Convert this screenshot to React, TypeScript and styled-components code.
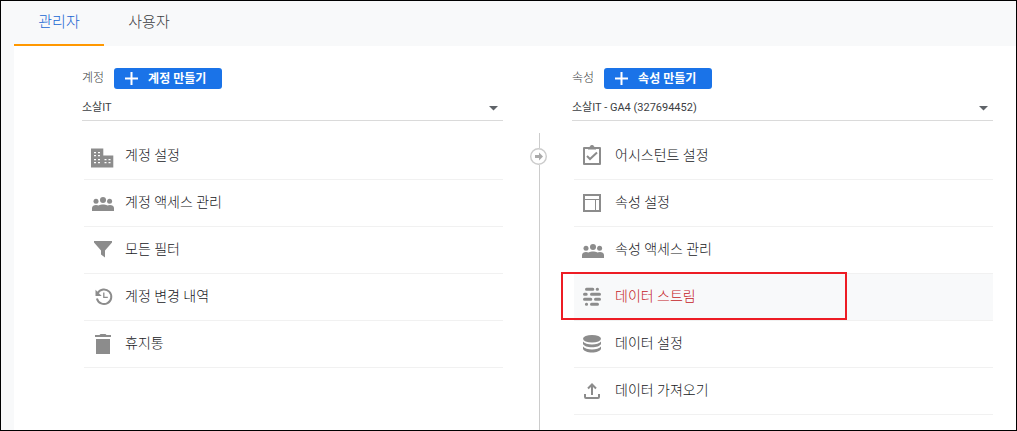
import React from "react";
import styled, { createGlobalStyle, css } from "styled-components";

const GlobalStyle = createGlobalStyle`
  *, *::before, *::after { box-sizing: border-box; }
  body {
    margin: 0;
    background: #fff;
    color: #3c4043;
    font-family: Roboto, "Noto Sans CJK KR", sans-serif;
    font-size: 14px;
  }
`;

const Page = styled.div`
  display: flex;
  flex-direction: column;
  min-height: 100vh;
  padding-left: 13px;
  border: 1px solid #000;
  background: #f8f9fa;
`;

const Tabs = styled.nav`
  display: flex;
  height: 45px;
`;

const Tab = styled.a<{ $active?: boolean }>`
  display: flex;
  align-items: center;
  justify-content: center;
  width: 90px;
  padding-bottom: 2px;
  border-bottom: 2px solid ${(p) => (p.$active ? "#ff9800" : "transparent")};
  color: ${(p) => (p.$active ? "#1967d2" : "#3c4043")};
  font-size: 15px;
  font-weight: 300;
  line-height: 20px;
  text-decoration: none;
`;

const Main = styled.main`
  flex: 1;
  display: grid;
  grid-template-columns: 1fr 69px 1fr;
  padding: 22px 23px 0 68px;
  background: #fff;
`;

const Column = styled.section`
  min-width: 0;
  padding-bottom: 15px;
`;

const ColumnHead = styled.div`
  display: flex;
  align-items: center;
  gap: 10px;
  height: 21px;
`;

const ColumnLabel = styled.label`
  padding-bottom: 2px;
  font-size: 12px;
  font-weight: 300;
  line-height: 16px;
`;

const CreateButton = styled.button`
  display: flex;
  align-items: center;
  gap: 10px;
  height: 21px;
  width: 108px;
  padding: 0 0 0 11px;
  border: 0;
  border-radius: 3px;
  background: #1a73e8;
  color: #fff;
  font: bold 12px/16px Roboto, "Noto Sans CJK KR", sans-serif;
  white-space: nowrap;
`;

const SelectWrap = styled.div`
  display: grid;
  grid-template-columns: 1fr 14px;
  align-items: center;
  height: 32px;
  margin-bottom: 12px;
  padding-top: 7px;
  border-bottom: 1px solid #dadada;
`;

const Select = styled.select`
  grid-area: 1 / 1 / 2 / 3;
  width: 100%;
  height: 24px;
  padding: 0;
  border: 0;
  appearance: none;
  background: transparent;
  color: #3c4043;
  font: 11px/16px Roboto, "Noto Sans CJK KR", sans-serif;
`;

const Caret = styled.svg`
  grid-area: 1 / 2 / 2 / 3;
  pointer-events: none;
`;

const List = styled.ul`
  margin: 0 0 0 2px;
  padding: 0;
  list-style: none;
`;

const Row = styled.li<{ $marked?: boolean }>`
  position: relative;
  height: 47px;
  border-bottom: 1px solid #f1f1f1;
  ${(p) =>
    p.$marked &&
    css`
      background: #f8f9fa;
      &::after {
        content: "";
        position: absolute;
        top: -2px;
        left: -13px;
        width: 286px;
        height: 48px;
        border: 2px solid #ed1c24;
        pointer-events: none;
      }
    `}
`;

const RowLink = styled.a<{ $marked?: boolean }>`
  display: flex;
  align-items: center;
  gap: 10px;
  height: 46px;
  padding-left: 7px;
  color: ${(p) => (p.$marked ? "#c5221f" : "#202124")};
  font-size: 14px;
  font-weight: 300;
  line-height: 20px;
  text-decoration: none;
`;

const RowText = styled.span`
  padding-bottom: 2px;
`;

const Icon = styled.svg`
  flex: none;
  fill: #8c8c8c;
`;

const Divider = styled.div`
  display: flex;
  flex-direction: column;
  align-items: center;
  padding: 65px 0 0 4px;
`;

const Line = styled.div<{ $short?: boolean }>`
  width: 1px;
  background: #ccc;
  ${(p) => (p.$short ? "height: 15px;" : "flex: 1;")}
`;

const stroke = { fill: "none", stroke: "#8c8c8c", strokeWidth: 2 };

const icons = {
  building: (
    <path
      fillRule="evenodd"
      d="M0 4.500h12.300v7H22.300v12H0zM3 8v1.300h2V8zM7 8v1.300h2V8zM3 11v1.300h2V11zM7 11v1.300h2V11zM3 15v1.300h2V15zM7 15v1.300h2V15zM3 18v1.300h2V18zM7 18v1.300h2V18zM13.500 15v1.300h2V15zM17.500 15v1.300h2V15zM13.500 18v1.300h2V18zM17.500 18v1.300h2V18z"
    />
  ),
  people: (
    <>
      <circle cx="12" cy="9" r="3" />
      <circle cx="5" cy="10.300" r="2.500" />
      <circle cx="18.600" cy="10.300" r="2.500" />
      <path d="M1 20v-3c0-2 2-3 4-3 1 0 2 .2 2.600.6C9 13.700 10.500 13.500 12 13.500s3 .2 4.400 1.100c.6-.4 1.600-.6 2.600-.6 2 0 4 1 4 3v3z" />
    </>
  ),
  filter: <path d="M3 3h18v1.500l-7 8V19.500l-4-3v-4L3 4.500z" />,
  history: (
    <>
      <path d="M6.700 8A7.300 7.300 0 1 1 5.900 13.500" {...stroke} />
      <path d="M4.500 4.800v6.200h6.200z" />
      <path d="M12.800 7.500v4.800h4" {...stroke} strokeWidth="1.300" />
    </>
  ),
  trash: <path d="M5 7h14v15H5zM4 3h4.500l1-1h5l1 1H20v2H4z" />,
  clipboard: (
    <>
      <path d="M3 4h16v16H3z" {...stroke} strokeLinejoin="round" />
      <path d="M7 4l2-1.500a2.100 2.100 0 0 1 4 0L15 4v1.500H7z" />
      <path d="M6 12l3 3 7-6.500" {...stroke} />
    </>
  ),
  layout: (
    <>
      <path d="M3 4h16v16H3z" {...stroke} />
      <path d="M3 8.500h16M14.500 8.500V20" {...stroke} strokeWidth="1" />
    </>
  ),
  stream: (
    <path
      d="M5.500 4.300h6.300M16.200 4.300h.3M3.500 9.300h1.700M10.500 9.300h8M3.500 14.300h6.300M14.500 14.300h4M5.400 19.300h.2M10.500 19.300h6"
      {...stroke}
      strokeWidth="3"
      strokeLinecap="round"
    />
  ),
  database: (
    <>
      <ellipse cx="11" cy="6.700" rx="9" ry="3.800" />
      <path d="M2 9.500c1.500 2 5 3 9 3s7.500-1 9-3V12c-1 2-4.500 3.300-9 3.300S3 14 2 12zM2 14.500c1.500 2 5 3 9 3s7.500-1 9-3V17c-1 2-4.500 3.600-9 3.600S3 19 2 17z" />
    </>
  ),
  upload: (
    <path d="M4 15v3a1 1 0 0 0 1 1h12a1 1 0 0 0 1-1v-3M11 16V6M7 9.500L11 5.500l4 4" {...stroke} />
  ),
};

type IconName = keyof typeof icons;
type Item = { icon: IconName; text: string; marked?: boolean };

const accountItems: Item[] = [
  { icon: "building", text: "계정 설정" },
  { icon: "people", text: "계정 액세스 관리" },
  { icon: "filter", text: "모든 필터" },
  { icon: "history", text: "계정 변경 내역" },
  { icon: "trash", text: "휴지통" },
];

const propertyItems: Item[] = [
  { icon: "clipboard", text: "어시스턴트 설정" },
  { icon: "layout", text: "속성 설정" },
  { icon: "people", text: "속성 액세스 관리" },
  { icon: "stream", text: "데이터 스트림", marked: true },
  { icon: "database", text: "데이터 설정" },
  { icon: "upload", text: "데이터 가져오기" },
];

type PanelProps = {
  id: string;
  label: string;
  action: string;
  value: string;
  items: Item[];
};

function Panel({ id, label, action, value, items }: PanelProps) {
  return (
    <Column>
      <ColumnHead>
        <ColumnLabel htmlFor={id}>{label}</ColumnLabel>
        <CreateButton type="button">
          <svg width="13" height="13" viewBox="0 0 13 13" aria-hidden="true">
            <path d="M6.500 0v13M0 6.500h13" stroke="#fff" strokeWidth="2" />
          </svg>
          {action}
        </CreateButton>
      </ColumnHead>
      <SelectWrap>
        <Select id={id} defaultValue={value}>
          <option value={value}>{value}</option>
        </Select>
        <Caret width="9" height="5" viewBox="0 0 9 5" aria-hidden="true">
          <path d="M0 0h9L4.500 4.500z" fill="#5f6368" />
        </Caret>
      </SelectWrap>
      <List>
        {items.map((item) => (
          <Row key={item.text} $marked={item.marked}>
            <RowLink href="#" $marked={item.marked}>
              <Icon width="24" height="24" viewBox="0 0 24 24" aria-hidden="true">
                {icons[item.icon]}
              </Icon>
              <RowText>{item.text}</RowText>
            </RowLink>
          </Row>
        ))}
      </List>
    </Column>
  );
}

export default function App() {
  return (
    <>
      <GlobalStyle />
      <Page>
        <Tabs>
          <Tab href="#" $active>관리자</Tab>
          <Tab href="#">사용자</Tab>
        </Tabs>
        <Main>
          <Panel id="account" label="계정" action="계정 만들기" value="소살IT" items={accountItems} />
          <Divider>
            <Line $short />
            <svg width="19" height="17" viewBox="0 0 19 17" aria-hidden="true">
              <circle cx="8.500" cy="8.500" r="7.800" fill="#fff" stroke="#ccc" strokeWidth="1.400" />
              <path d="M5 7h4V4.500l4 4-4 4V10H5z" fill="#aaa" />
            </svg>
            <Line />
          </Divider>
          <Panel id="property" label="속성" action="속성 만들기" value="소살IT - GA4 (327694452)" items={propertyItems} />
        </Main>
      </Page>
    </>
  );
}
